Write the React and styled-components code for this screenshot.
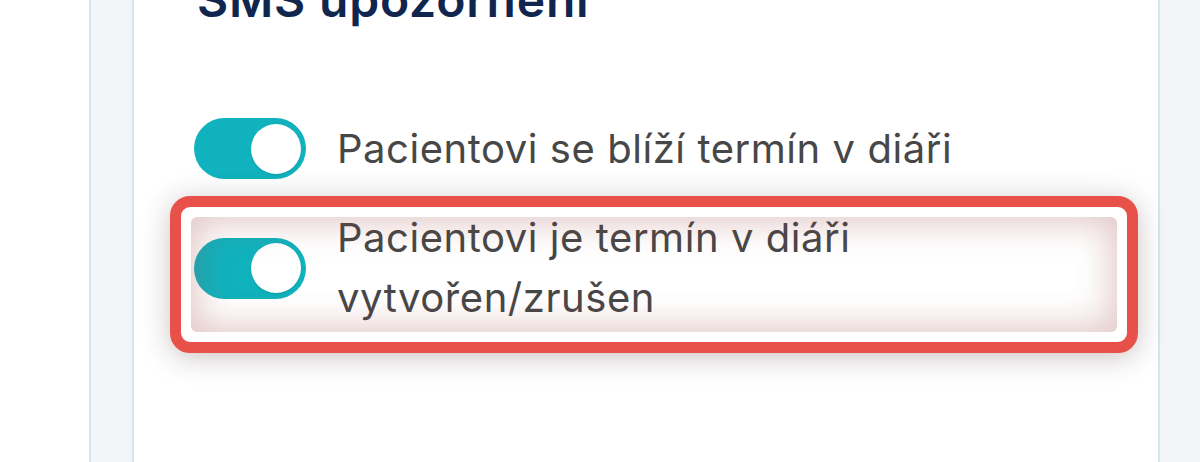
import React from "react";
import styled, { createGlobalStyle } from "styled-components";

const Global = createGlobalStyle`
  html, body { margin: 0; padding: 0; background: #fff; overflow: hidden; }
  body { font-family: Inter, "Noto Sans", sans-serif; }
  * { box-sizing: border-box; }
`;

const Page = styled.div`
  width: 1200px;
  height: 462px;
  overflow: hidden;
  background: #fff;
  padding-left: 89px;
  display: flex;
`;

const Panel = styled.div`
  flex: 1;
  background: #f3f6f9;
  border-left: 2px solid #d6e7eb;
  padding-left: 41px;
  display: flex;
  align-items: stretch;
`;

const Card = styled.section`
  width: 1028px;
  flex: none;
  background: #fff;
  border-left: 2px solid #d6e7eb;
  border-right: 2px solid #d6e7eb;
  padding: 0 61px 0 60px;
  display: flex;
  flex-direction: column;
`;

const Heading = styled.h2`
  margin: -28px 0 90px 3px;
  font-size: 48px;
  line-height: 56px;
  font-weight: 600;
  color: #10264f;
  letter-spacing: 0.8px;
`;

const List = styled.div`
  display: flex;
  flex-direction: column;
  gap: 29px;
`;

const Row = styled.div`
  position: relative;
  display: flex;
  align-items: center;
  gap: 31px;
`;

const Track = styled.span`
  flex: none;
  width: 112px;
  height: 61px;
  border-radius: 31px;
  background: #10b2bd;
  display: flex;
  align-items: center;
  justify-content: ${(p) => (p.$on ? "flex-end" : "flex-start")};
  padding: 0 5px;
`;

const Knob = styled.span`
  width: 50px;
  height: 50px;
  border-radius: 50%;
  background: #fff;
  box-shadow: 0 1px 2px rgba(0, 0, 0, 0.12);
`;

const Label = styled.span`
  font-size: 40px;
  line-height: 60px;
  color: #474747;
  letter-spacing: 0.55px;
`;

const Highlight = styled.div`
  position: absolute;
  left: -24px;
  top: -12px;
  right: -41px;
  bottom: -25px;
  border: 11px solid #e8514a;
  border-radius: 20px;
  padding: 10px;
  pointer-events: none;
  box-shadow: 0 4px 28px rgba(70, 40, 40, 0.28);
`;

const HighlightInner = styled.div`
  width: 100%;
  height: 100%;
  border-radius: 6px;
  box-shadow: inset 0 0 34px 6px rgba(160, 70, 70, 0.3);
`;

const Toggle = ({ on }) => (
  <Track $on={on}>
    <Knob />
  </Track>
);

export default function App() {
  return (
    <>
      <Global />
      <Page>
        <Panel>
          <Card>
            <Heading>SMS upozornění</Heading>
            <List>
              <Row>
                <Toggle on />
                <Label>Pacientovi se blíží termín v diáři</Label>
              </Row>
              <Row>
                <Toggle on />
                <Label>Pacientovi je termín v diáři vytvořen/zrušen</Label>
                <Highlight>
                  <HighlightInner />
                </Highlight>
              </Row>
            </List>
          </Card>
        </Panel>
      </Page>
    </>
  );
}
